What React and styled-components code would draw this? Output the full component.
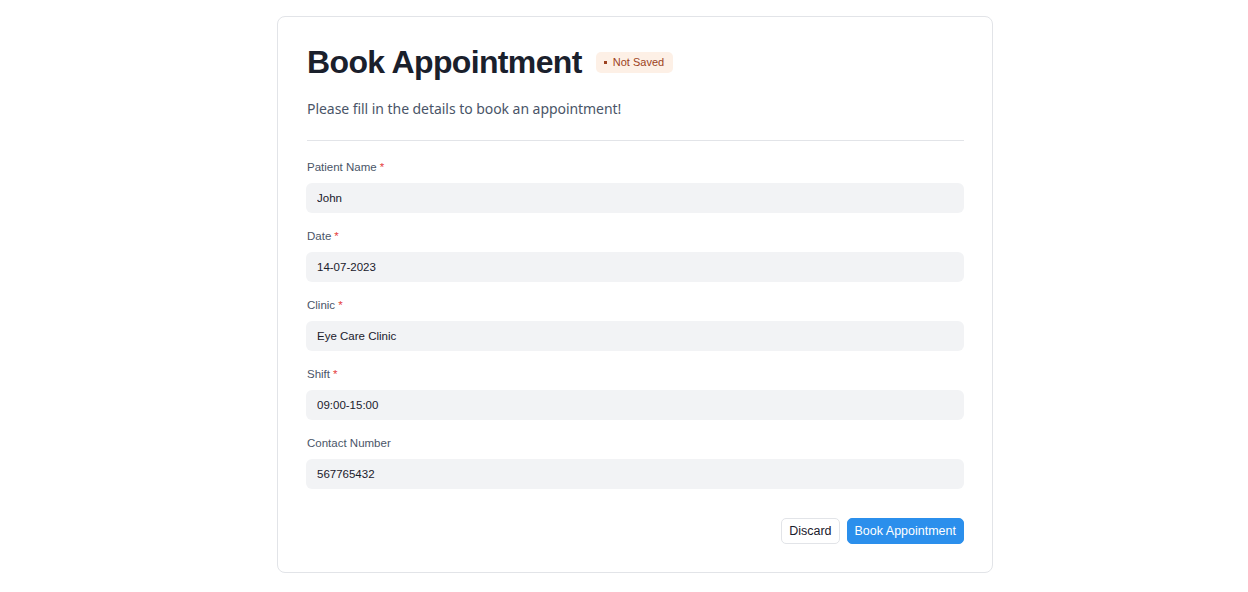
import React, { useState } from "react";
import styled, { createGlobalStyle } from "styled-components";

const GlobalStyle = createGlobalStyle`
  * { box-sizing: border-box; }
  body {
    margin: 0;
    background: #ffffff;
    font-family: "Liberation Sans", Arial, sans-serif;
  }
`;

const Page = styled.div`
  padding: 16px 0 20px 277px;
`;

const Card = styled.div`
  width: 716px;
  border: 1px solid #e2e4e8;
  border-radius: 8px;
  padding: 26px 28px 28px 29px;
  background: #fff;
`;

const Header = styled.div`
  display: flex;
  align-items: center;
  gap: 14px;
`;

const Title = styled.h1`
  margin: 0;
  font-size: 32px;
  line-height: 38px;
  font-weight: 700;
  letter-spacing: -0.02em;
  color: #1a202c;
`;

const Badge = styled.span`
  display: inline-flex;
  align-items: center;
  gap: 6px;
  height: 21px;
  padding: 0 9px 0 8px;
  border-radius: 5px;
  background: #fdf0e6;
  color: #9c4221;
  font-size: 11px;
`;

const Dot = styled.span`
  width: 3px;
  height: 3px;
  background: #9c4221;
`;

const Subtitle = styled.p`
  margin: 18px 0 0;
  font-family: "Noto Sans", "Open Sans", sans-serif;
  font-size: 14px;
  line-height: 20px;
  letter-spacing: -0.05px;
  color: #4a5568;
`;

const Divider = styled.hr`
  border: 0;
  border-top: 1px solid #e2e4e8;
  margin: 21px 0 0;
`;

const Form = styled.div`
  display: flex;
  flex-direction: column;
  gap: 16px;
  margin-top: 19px;
`;

const Field = styled.div`
  display: flex;
  flex-direction: column;
  gap: 9px;
`;

const Label = styled.label`
  font-size: 11.5px;
  line-height: 14px;
  color: #4a5568;
`;

const Required = styled.span`
  color: #e53e3e;
  margin-left: 3px;
`;

const Input = styled.input`
  width: calc(100% + 1px);
  height: 30px;
  margin-left: -1px;
  border: 0;
  border-radius: 6px;
  background: #f2f3f5;
  padding: 0 11px;
  font-family: "Liberation Sans", Arial, sans-serif;
  font-size: 11.5px;
  color: #1a202c;
  outline: none;
`;

const Actions = styled.div`
  display: flex;
  justify-content: flex-end;
  gap: 7px;
  margin-top: 29px;
`;

const Button = styled.button`
  height: 26px;
  padding: 0 7px;
  border-radius: 5px;
  font-family: "Liberation Sans", Arial, sans-serif;
  font-size: 12.5px;
  cursor: pointer;
  border: 1px solid ${(p) => (p.$primary ? "#2b8fec" : "#e2e4e8")};
  background: ${(p) => (p.$primary ? "#2b8fec" : "#fff")};
  color: ${(p) => (p.$primary ? "#fff" : "#1a202c")};
`;

const fields = [
  { name: "patient", label: "Patient Name", value: "John", required: true },
  { name: "date", label: "Date", value: "14-07-2023", required: true },
  { name: "clinic", label: "Clinic", value: "Eye Care Clinic", required: true },
  { name: "shift", label: "Shift", value: "09:00-15:00", required: true },
  { name: "contact", label: "Contact Number", value: "567765432", required: false },
];

export default function App() {
  const [values, setValues] = useState(
    Object.fromEntries(fields.map((f) => [f.name, f.value]))
  );

  return (
    <Page>
      <GlobalStyle />
      <Card>
        <Header>
          <Title>Book Appointment</Title>
          <Badge>
            <Dot />
            Not Saved
          </Badge>
        </Header>
        <Subtitle>Please fill in the details to book an appointment!</Subtitle>
        <Divider />
        <Form>
          {fields.map((f) => (
            <Field key={f.name}>
              <Label>
                {f.label}
                {f.required && <Required>*</Required>}
              </Label>
              <Input
                value={values[f.name]}
                onChange={(e) => setValues({ ...values, [f.name]: e.target.value })}
              />
            </Field>
          ))}
        </Form>
        <Actions>
          <Button>Discard</Button>
          <Button $primary>Book Appointment</Button>
        </Actions>
      </Card>
    </Page>
  );
}
